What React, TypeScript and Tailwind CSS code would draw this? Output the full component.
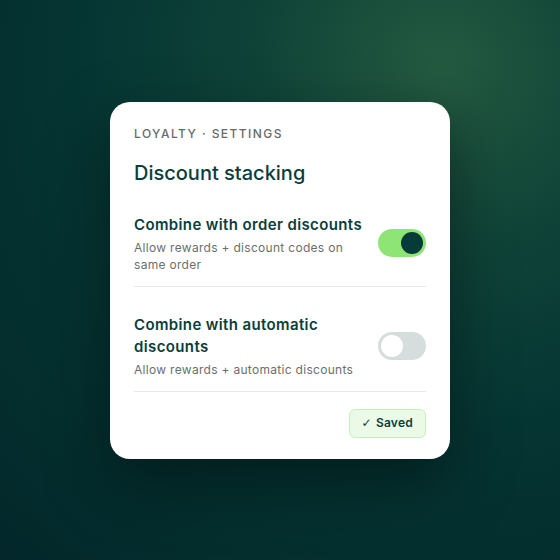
import { useState } from "react";

function Toggle({ on, onClick }: { on: boolean; onClick: () => void }) {
  return (
    <button
      type="button"
      onClick={onClick}
      className={`relative h-[28px] w-[48px] shrink-0 rounded-full transition-colors ${
        on ? "bg-[#8ee474]" : "bg-[#d6dedd]"
      }`}
    >
      <span
        className={`absolute top-[3px] h-[22px] w-[22px] rounded-full transition-all ${
          on ? "left-[23px] bg-[#063b3a]" : "left-[3px] bg-white"
        }`}
      />
    </button>
  );
}

function SettingRow({
  title,
  desc,
  on,
  onToggle,
}: {
  title: string;
  desc: string;
  on: boolean;
  onToggle: () => void;
}) {
  return (
    <div className="flex items-center justify-between gap-4 border-b border-[#e5ebe9] pt-[27px] pb-[13px]">
      <div className="w-[230px]">
        <div className="text-[15px] font-semibold leading-[22px] tracking-[0.025em] text-[#0a3d3b]">{title}</div>
        <div className="mt-[3px] text-[12px] leading-[17px] tracking-[0.025em] text-[#6a6f6e]">{desc}</div>
      </div>
      <Toggle on={on} onClick={onToggle} />
    </div>
  );
}

export default function App() {
  const [orderDiscounts, setOrderDiscounts] = useState(true);
  const [autoDiscounts, setAutoDiscounts] = useState(false);

  return (
    <div
      className="flex h-[560px] w-[560px] items-center justify-center bg-[radial-gradient(circle_at_440px_70px,#245a40_0%,#0f4338_28%,#053533_55%,#03272a_100%)]"
      style={{ fontFamily: "Inter, 'Noto Sans', sans-serif" }}
    >
      <div className="w-[340px] rounded-[20px] bg-white px-6 pt-6 pb-[21px] shadow-[0_24px_60px_rgba(0,15,15,0.55)]">
        <div className="text-[12px] font-medium uppercase leading-4 tracking-[0.12em] text-[#666a69]">
          Loyalty · Settings
        </div>
        <div className="mt-[17px] text-[20px] font-medium leading-7 text-[#0a3d3b]">Discount stacking</div>

        <SettingRow
          title="Combine with order discounts"
          desc="Allow rewards + discount codes on same order"
          on={orderDiscounts}
          onToggle={() => setOrderDiscounts(!orderDiscounts)}
        />
        <SettingRow
          title="Combine with automatic discounts"
          desc="Allow rewards + automatic discounts"
          on={autoDiscounts}
          onToggle={() => setAutoDiscounts(!autoDiscounts)}
        />

        <div className="flex justify-end pt-[17px]">
          <div className="flex h-[29px] items-center gap-[4px] rounded-[6px] border border-[#c6efbd] bg-[#ebf9e7] px-[12px] text-[12px] font-semibold tracking-[0.02em] text-[#0a3d3b]">
            <span className="font-normal" style={{ fontFamily: "'DejaVu Sans', sans-serif" }}>
              ✓
            </span>
            <span>Saved</span>
          </div>
        </div>
      </div>
    </div>
  );
}
